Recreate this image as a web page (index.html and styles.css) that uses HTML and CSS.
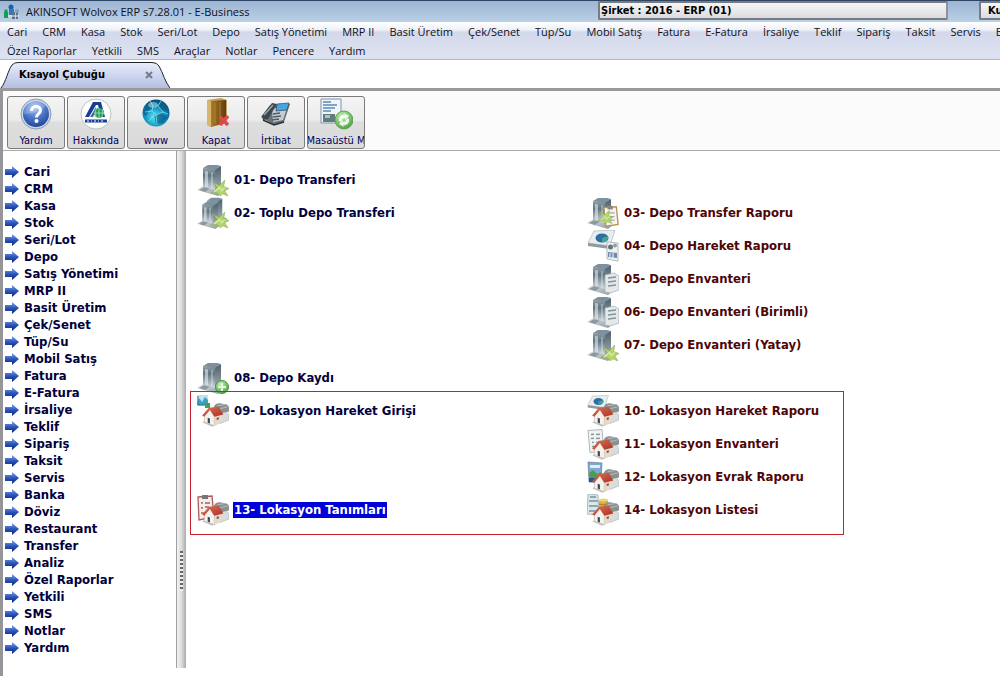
FILE: index.html
```html
<!DOCTYPE html>
<html lang="tr">
<head>
<meta charset="utf-8">
<title>AKINSOFT Wolvox ERP</title>
<link rel="stylesheet" href="styles.css">
</head>
<body>
<svg class="defs" aria-hidden="true">
  <defs>
    <linearGradient id="gMetal" x1="0" y1="0" x2="0" y2="1"><stop offset="0" stop-color="#8fa0a9"/><stop offset=".35" stop-color="#5f7480"/><stop offset="1" stop-color="#d3dbe0"/></linearGradient>
    <linearGradient id="gSide" x1="0" y1="0" x2="0" y2="1"><stop offset="0" stop-color="#4c5f6b"/><stop offset="1" stop-color="#a3b0b7"/></linearGradient>
    <linearGradient id="gBase" x1="0" y1="0" x2="1" y2="1"><stop offset="0" stop-color="#dfe5e8"/><stop offset="1" stop-color="#87949b"/></linearGradient>
    <linearGradient id="gArrow" x1="0" y1="0" x2="0" y2="1"><stop offset="0" stop-color="#7fa6ea"/><stop offset=".5" stop-color="#2b55bd"/><stop offset="1" stop-color="#0d2470"/></linearGradient>
    <linearGradient id="gRoof" x1="0" y1="0" x2="1" y2="1"><stop offset="0" stop-color="#e2735b"/><stop offset="1" stop-color="#a93222"/></linearGradient>
    <linearGradient id="gDoor" x1="0" x2="1"><stop offset="0" stop-color="#a97c2b"/><stop offset=".5" stop-color="#86591a"/><stop offset="1" stop-color="#5f3d10"/></linearGradient>
    <radialGradient id="gHelp" cx=".45" cy=".25" r=".8"><stop offset="0" stop-color="#a9c6f3"/><stop offset=".5" stop-color="#4c78c9"/><stop offset="1" stop-color="#1c3f92"/></radialGradient>
    <radialGradient id="gGlobe" cx=".45" cy=".65" r=".7"><stop offset="0" stop-color="#5fe4f4"/><stop offset=".5" stop-color="#1398c6"/><stop offset="1" stop-color="#053d6d"/></radialGradient>
    <radialGradient id="gGreen" cx=".4" cy=".3" r=".8"><stop offset="0" stop-color="#c6f0b4"/><stop offset="1" stop-color="#3f9c38"/></radialGradient>
    <symbol id="arrow" viewBox="0 0 14 12"><path d="M0 3h7V0l7 6-7 6V9H0z" fill="url(#gArrow)"/></symbol>
    <symbol id="towerShape" viewBox="0 0 32 32">
      <path d="M0 26l8-5 22 4-9 7z" fill="url(#gBase)"/>
      <path d="M2 26l7-4 6 1-7 5z" fill="#8d999f"/>
      <path d="M6 4l12 1v21L6 23z" fill="url(#gMetal)"/>
      <path d="M18 5l6-3v21l-6 4z" fill="url(#gSide)"/>
      <path d="M6 4l5-3h9l4 1-6 4z" fill="#7c919d"/>
      <path d="M8 7l3 .4V23l-3-.6z" fill="#eef2f4" opacity=".55"/>
      <path d="M14 8l2 .2v16l-2-.5z" fill="#eef2f4" opacity=".35"/>
    </symbol>
    <symbol id="leafArrow" viewBox="0 0 17 16"><path d="M0 13l6-5-4-5 6 3 5-5-1 6 5 2-4 2 3 5-5-2-2 2-3-3z" fill="#b4d56c" stroke="#7fa348" stroke-width=".5"/><path d="M3 12l5-4 2 3 3-3" stroke="#e0f0b4" fill="none"/></symbol>
    <symbol id="homes" viewBox="0 0 26 22">
      <path d="M1 18l9 4 15-7-8-4z" fill="#bfc5c4"/>
      <path d="M14 8l7-1 4 4v5l-8 3-3-3z" fill="#d9dcdc" stroke="#9a9f9f" stroke-width=".4"/>
      <path d="M11 6c1-4 3-5 6-5l6 1c2 1 3 4 3 6l-9 2c-1-2-3-4-6-4z" fill="#89908f"/>
      <path d="M15 3l7-1M16 6l8-2" stroke="#b3b9b8" fill="none"/>
      <path d="M3 12l5-6 4 7v8l-9-3z" fill="#f5f2eb" stroke="#b8aa9d" stroke-width=".5"/>
      <path d="M12 12l6-1v7l-6 3z" fill="#ead9cb"/>
      <path d="M1 12l6-7 9-1 4 7-8 2-4-6-5 6z" fill="url(#gRoof)"/>
      <path d="M6 14l2 .5V19l-2-.6z" fill="#3d4960"/><path d="M14 14l2-.5v2l-2 .5z" fill="#775e55"/>
    </symbol>
    <symbol id="sheet" viewBox="0 0 18 24"><path d="M1 1l14-1 2 21-14 2z" fill="#f1f4f5" stroke="#9ba5a9" stroke-width=".8"/><path d="M4 5l3-.2M9 5l4-.3M4 9l3-.2M9 9l4-.3M5 13l2-.2M9 13l5-.4M5 17l2-.2M9 17l5-.4" stroke="#8a969e" stroke-width="1.500"/></symbol>
    <symbol id="disc" viewBox="0 0 30 20"><path d="M7 1l21-1-5 16-22-3z" fill="#e8edef" stroke="#aeb6ba" stroke-width=".7"/><path d="M1 13l22 3v3L1 16z" fill="#8f999e"/><ellipse cx="15" cy="8" rx="6.500" ry="4.500" fill="#2d6da2"/><path d="M15 8l6-2c1 3-2 6-6 6.500z" fill="#43a394"/></symbol>
    <symbol id="clip" viewBox="0 0 18 26"><path d="M1 3l14-1 2 20-14 2z" fill="#f6f4ee" stroke="#b9934f" stroke-width="1.500"/><path d="M5 1h6v4H5z" fill="#8a8680"/><path d="M5 9h8M5 13h8M6 17h7" stroke="#a3a8a8" stroke-width="1.300"/></symbol>

    <symbol id="depo" viewBox="0 0 32 32"><use href="#towerShape" width="32" height="32"/><use href="#leafArrow" x="14" y="15" width="18" height="17"/></symbol>
    <symbol id="depo2" viewBox="0 0 32 32"><use href="#towerShape" x="5" width="27" height="27"/><use href="#towerShape" y="4" width="28" height="28"/><use href="#leafArrow" x="14" y="14" width="18" height="17"/></symbol>
    <symbol id="depoClip" viewBox="0 0 32 32"><use href="#towerShape" width="32" height="32"/><use href="#clip" x="16" y="7" width="16" height="25"/><use href="#leafArrow" x="11" y="12" width="15" height="15"/></symbol>
    <symbol id="depoDisc" viewBox="0 0 32 32"><use href="#disc" width="30" height="20"/><path d="M20 12l11 1v18l-11-2z" fill="#eef2f4" stroke="#9aa5ab" stroke-width=".7"/><circle cx="23.500" cy="17" r="2.500" fill="#68747b"/><circle cx="28" cy="15.500" r="2" fill="#8ea0aa"/><path d="M21 22l9 1v5l-9-1z" fill="#6d88b1"/><path d="M23 23v4M26 23v5" stroke="#fff"/></symbol>
    <symbol id="depoSheet" viewBox="0 0 32 32"><use href="#towerShape" width="32" height="32"/><path d="M18 12l9-2 5 3v14l-9 3-5-1z" fill="#e3e8eb" stroke="#a2adb3" stroke-width=".7"/><path d="M21 15l8-1M21 19l8-1M21 23l8-1" stroke="#87939a" stroke-width="1.500"/></symbol>
    <symbol id="depoAdd" viewBox="0 0 32 32"><use href="#towerShape" width="32" height="32"/><circle cx="25" cy="25" r="6.500" fill="url(#gGreen)" stroke="#568a42"/><path d="M25 21v8M21 25h8" stroke="#e7f7dd" stroke-width="2"/></symbol>
    <symbol id="homeChart" viewBox="0 0 32 32"><path d="M0 0h11v11H0z" fill="#bfe3ef"/><path d="M0 9l2-6 3 4 3-5 3 3v5H0z" fill="#3f9fc3"/><path d="M1 1v9h10" stroke="#287b9b" fill="none"/><path d="M8 8l4 4M8 12h4V8" stroke="#3ba453" stroke-width="2"/><use href="#homes" x="4" y="7" width="29" height="25"/></symbol>
    <symbol id="homeClip" viewBox="0 0 32 32"><path d="M1 3l14-1 2 21-15 3z" fill="#f6ecec" stroke="#a95e5e" stroke-width="1.300"/><path d="M5 1h6v4H5z" fill="#777"/><path d="M4 9l2-.2M8 9h5M4 14l2-.2M8 13h4M4 19h4" stroke="#966" stroke-width="1.500"/><use href="#homes" x="4" y="7" width="29" height="25"/></symbol>
    <symbol id="homeDisc" viewBox="0 0 32 32"><use href="#disc" width="23" height="16"/><use href="#homes" x="4" y="7" width="29" height="25"/></symbol>
    <symbol id="homeSheet" viewBox="0 0 32 32"><use href="#sheet" width="18" height="27"/><use href="#homes" x="4" y="7" width="29" height="25"/></symbol>
    <symbol id="homeDoc" viewBox="0 0 32 32"><path d="M1 1l14 1-1 20-12-1z" fill="#7da8cf" stroke="#6a7d92" stroke-width=".7"/><path d="M3 4h10v3H3z" fill="#e2eef5"/><path d="M2 12l4-3 4 4 4-2v9H3z" fill="#4b9c52"/><path d="M2 17h11v4H2z" fill="#2c5688"/><use href="#homes" x="4" y="7" width="29" height="25"/></symbol>
    <symbol id="homeList" viewBox="0 0 32 32"><path d="M1 0l10 1 1 20-12-1z" fill="#dbe6e7" stroke="#93a3a7" stroke-width=".7"/><path d="M3 3h6M2 7h9M2 12h9M2 17h8" stroke="#7593a5" stroke-width="1.500"/><path d="M12 6c2-1 7-1 9 0v10h-9z" fill="#d9b13b"/><ellipse cx="16.500" cy="6" rx="4.500" ry="1.600" fill="#f0d474"/><path d="M12 10c3 1 6 1 9 0" stroke="#a27d1b" fill="none"/><use href="#homes" x="4" y="7" width="29" height="25"/></symbol>
  </defs>
</svg>

<header class="titlebar">
  <svg class="app-icon" viewBox="0 0 16 16"><circle cx="7" cy="3" r="2.500" fill="#1e5fae"/><path d="M5 5h5v6H5z" fill="#2e7cc0"/><path d="M0 8h4v6H0z" fill="#12a048"/><circle cx="2" cy="7" r="1.700" fill="#12a048"/><path d="M8 8h3v7H8zM12 8h2v7h-2z" fill="#5d7187"/><circle cx="13" cy="7" r="2" fill="#8aa0b5"/><path d="M4 12h11" stroke="#eef"/></svg>
  <h1 class="title">AKINSOFT Wolvox ERP s7.28.01 - E-Business</h1>
  <div class="status company">Şirket : 2016 - ERP (01)</div>
  <div class="status user">Ku</div>
</header>

<nav class="menubar" aria-label="Ana menü">
  <div class="menu-row">
    <button>Cari</button><button>CRM</button><button>Kasa</button><button>Stok</button><button>Seri/Lot</button><button>Depo</button><button>Satış Yönetimi</button><button>MRP II</button><button>Basit Üretim</button><button>Çek/Senet</button><button>Tüp/Su</button><button>Mobil Satış</button><button>Fatura</button><button>E-Fatura</button><button>İrsaliye</button><button>Teklif</button><button>Sipariş</button><button>Taksit</button><button>Servis</button><button>Banka</button>
  </div>
  <div class="menu-row">
    <button>Özel Raporlar</button><button>Yetkili</button><button>SMS</button><button>Araçlar</button><button>Notlar</button><button>Pencere</button><button>Yardım</button>
  </div>
</nav>

<div class="tabs">
  <div class="tab">
    <svg class="tab-shape" viewBox="0 0 170 26" aria-hidden="true"><defs><linearGradient id="gTab" x1="0" y1="0" x2="0" y2="1"><stop offset="0" stop-color="#e9edfa"/><stop offset="1" stop-color="#b4bfe4"/></linearGradient></defs><path d="M1 26C6 20 8 8 12 3Q14 .5 18 .5H152Q157 .5 159 4C163 11 165 20 170 26" fill="url(#gTab)" stroke="#20242e"/></svg>
    <span class="tab-label">Kısayol Çubuğu</span>
    <button class="tab-close" aria-label="Kapat"><svg viewBox="0 0 8 8"><path d="M1 1l6 6M7 1L1 7" stroke="#777b88" stroke-width="2"/></svg></button>
  </div>
</div>

<div class="workspace">
  <div class="toolbar">
    <button class="tool"><svg viewBox="0 0 34 34"><circle cx="17" cy="17" r="15" fill="#ccd6e6" stroke="#8b9bb8"/><circle cx="17" cy="17" r="13" fill="url(#gHelp)"/><path d="M5 17a12 12 0 0 1 22-8Q20 17 5 17z" fill="#fff" opacity=".2"/><path d="M12.500 14c0-6 9-6 9-.5 0 3-4 3.500-4 7" fill="none" stroke="#fff" stroke-width="3"/><circle cx="17.500" cy="24" r="2" fill="#fff"/></svg><span>Yardım</span></button>
    <button class="tool"><svg viewBox="0 0 34 34"><circle cx="17" cy="17" r="15" fill="#fff" stroke="#aaa" stroke-width=".7"/><path d="M6 20L14 5h8l4 15h-4L19 8h-2l-7 12z" fill="#173e95"/><path d="M11 20l6-10v4l-3 6z" fill="#3e67b5"/><circle cx="20" cy="16" r="5" fill="#23a05c"/><path d="M15 16h10M20 11v10M17 12q-2 4 0 8M23 12q2 4 0 8" stroke="#d6f0df" stroke-width=".6" fill="none"/><path d="M6 22.500h22v3H6z" fill="#173e95"/><path d="M8 24h2M12 24h1M15 24h2M19 24h1M22 24h2" stroke="#fff"/></svg><span>Hakkında</span></button>
    <button class="tool"><svg viewBox="0 0 34 34"><circle cx="17" cy="16" r="13.500" fill="url(#gGlobe)"/><path d="M7 9q5-7 10-4l-1 5-6 3-3 6-3-3zM21 6q6 3 7 8l-6-1-3-4zM15 18l7-2 6 4-4 6-7 1z" fill="#06597f" opacity=".65"/><path d="M6 15l7-1 4 4 7-3 5 2M11 4l3 5-1 5M22 4l-3 5 5 6M10 24l3-4 4-2 1 9" stroke="#8eeef6" stroke-width=".7" fill="none"/><ellipse cx="14" cy="8" rx="5" ry="3" fill="#d6fbff" opacity=".45"/></svg><span>www</span></button>
    <button class="tool"><svg viewBox="0 0 34 34"><path d="M8 3l14-2 6 2v24l-6-1-10 4-4-2z" fill="#c6a15b"/><path d="M8 3l4 1v26l-4-2z" fill="#d8b56d"/><path d="M12 4l15-1v23l-15 4z" fill="url(#gDoor)"/><path d="M16 6v20M21 5v20" stroke="#b68b3e" stroke-width=".8"/><path d="M21 20l8 8M29 19l-8 9" stroke="#e5454b" stroke-width="3.500"/></svg><span>Kapat</span></button>
    <button class="tool"><svg viewBox="0 0 34 34"><path d="M2 20l9-12 20-1-6 18-10 3z" fill="#68727a"/><path d="M13 12l16-4-5 15-10 2z" fill="#c5cdd1"/><path d="M18 7l12-1-2 7-11 1z" fill="#45a5e2" stroke="#33444f" stroke-width=".7"/><path d="M3 19L13 6l5 1-9 15-5 1z" fill="#3d464d"/><path d="M5 18L14 8" stroke="#9ca8ae" stroke-width="1.500"/><path d="M14 17l7-1M14 20l8-1M13 23l7-1" stroke="#505b63" stroke-width="1.500"/><path d="M4 23l11 5 10-3" stroke="#2c3338" stroke-width="1.500" fill="none"/></svg><span>İrtibat</span></button>
    <button class="tool"><svg viewBox="0 0 34 34"><path d="M2 2h20v24H2z" fill="#eef5fb" stroke="#7b94ad"/><path d="M4 5h8M4 8h14M4 11h12M4 14h8" stroke="#5e8ab5" stroke-width="1.300"/><path d="M4 17h12v8H4z" fill="#607d79"/><path d="M6 18h5v3H6z" fill="#a4c6dd"/><circle cx="25" cy="23" r="9" fill="url(#gGreen)" stroke="#609f4e"/><path d="M20 24a5 5 0 0 1 6-6l-1-2 5 3-4 4v-2q-3 0-4 4zM30 22a5 5 0 0 1-6 6l1 2-5-3 4-4v2q3 0 4-4z" fill="#fff" opacity=".85"/></svg><span>Masaüstü M</span></button>
  </div>

  <div class="panes">
    <nav class="sidebar" aria-label="Modüller">
      <ul class="modules">
        <li><a href="#"><svg><use href="#arrow"/></svg>Cari</a></li>
        <li><a href="#"><svg><use href="#arrow"/></svg>CRM</a></li>
        <li><a href="#"><svg><use href="#arrow"/></svg>Kasa</a></li>
        <li><a href="#"><svg><use href="#arrow"/></svg>Stok</a></li>
        <li><a href="#"><svg><use href="#arrow"/></svg>Seri/Lot</a></li>
        <li><a href="#"><svg><use href="#arrow"/></svg>Depo</a></li>
        <li><a href="#"><svg><use href="#arrow"/></svg>Satış Yönetimi</a></li>
        <li><a href="#"><svg><use href="#arrow"/></svg>MRP II</a></li>
        <li><a href="#"><svg><use href="#arrow"/></svg>Basit Üretim</a></li>
        <li><a href="#"><svg><use href="#arrow"/></svg>Çek/Senet</a></li>
        <li><a href="#"><svg><use href="#arrow"/></svg>Tüp/Su</a></li>
        <li><a href="#"><svg><use href="#arrow"/></svg>Mobil Satış</a></li>
        <li><a href="#"><svg><use href="#arrow"/></svg>Fatura</a></li>
        <li><a href="#"><svg><use href="#arrow"/></svg>E-Fatura</a></li>
        <li><a href="#"><svg><use href="#arrow"/></svg>İrsaliye</a></li>
        <li><a href="#"><svg><use href="#arrow"/></svg>Teklif</a></li>
        <li><a href="#"><svg><use href="#arrow"/></svg>Sipariş</a></li>
        <li><a href="#"><svg><use href="#arrow"/></svg>Taksit</a></li>
        <li><a href="#"><svg><use href="#arrow"/></svg>Servis</a></li>
        <li><a href="#"><svg><use href="#arrow"/></svg>Banka</a></li>
        <li><a href="#"><svg><use href="#arrow"/></svg>Döviz</a></li>
        <li><a href="#"><svg><use href="#arrow"/></svg>Restaurant</a></li>
        <li><a href="#"><svg><use href="#arrow"/></svg>Transfer</a></li>
        <li><a href="#"><svg><use href="#arrow"/></svg>Analiz</a></li>
        <li><a href="#"><svg><use href="#arrow"/></svg>Özel Raporlar</a></li>
        <li><a href="#"><svg><use href="#arrow"/></svg>Yetkili</a></li>
        <li><a href="#"><svg><use href="#arrow"/></svg>SMS</a></li>
        <li><a href="#"><svg><use href="#arrow"/></svg>Notlar</a></li>
        <li><a href="#"><svg><use href="#arrow"/></svg>Yardım</a></li>
      </ul>
    </nav>
    <div class="splitter"><div class="grip"></div></div>
    <main class="content">
      <div class="shortcuts">
        <a class="item" href="#"><svg><use href="#depo"/></svg><span>01- Depo Transferi</span></a>
        <a class="item" href="#"><svg><use href="#depo2"/></svg><span>02- Toplu Depo Transferi</span></a>
        <a class="item report" href="#"><svg><use href="#depoClip"/></svg><span>03- Depo Transfer Raporu</span></a>
        <a class="item report" href="#"><svg><use href="#depoDisc"/></svg><span>04- Depo Hareket Raporu</span></a>
        <a class="item report" href="#"><svg><use href="#depoSheet"/></svg><span>05- Depo Envanteri</span></a>
        <a class="item report" href="#"><svg><use href="#depoSheet"/></svg><span>06- Depo Envanteri (Birimli)</span></a>
        <a class="item report" href="#"><svg><use href="#depo"/></svg><span>07- Depo Envanteri (Yatay)</span></a>
        <a class="item" href="#"><svg><use href="#depoAdd"/></svg><span>08- Depo Kaydı</span></a>
      </div>
      <div class="shortcuts marked">
        <a class="item" href="#"><svg><use href="#homeChart"/></svg><span>09- Lokasyon Hareket Girişi</span></a>
        <a class="item report" href="#"><svg><use href="#homeDisc"/></svg><span>10- Lokasyon Hareket Raporu</span></a>
        <a class="item report" href="#"><svg><use href="#homeSheet"/></svg><span>11- Lokasyon Envanteri</span></a>
        <a class="item report" href="#"><svg><use href="#homeDoc"/></svg><span>12- Lokasyon Evrak Raporu</span></a>
        <a class="item selected" href="#"><svg><use href="#homeClip"/></svg><span>13- Lokasyon Tanımları</span></a>
        <a class="item report" href="#"><svg><use href="#homeList"/></svg><span>14- Lokasyon Listesi</span></a>
      </div>
    </main>
  </div>
</div>
</body>
</html>
```

FILE: styles.css
```css
* { box-sizing: border-box; }

body {
  margin: 0;
  min-height: 100vh;
  display: flex;
  flex-direction: column;
  overflow: hidden;
  background: #fff;
  color: #101018;
  font: 11px/16px "DejaVu Sans Condensed", "Noto Sans", sans-serif;
}

button {
  margin: 0;
  padding: 0;
  border: 0;
  background: none;
  color: inherit;
  font: inherit;
  white-space: nowrap;
}

a { color: inherit; text-decoration: none; }

.defs { position: absolute; width: 0; height: 0; }

/* Title bar */
.titlebar {
  display: flex;
  align-items: center;
  height: 22px;
  padding-left: 4px;
  border-top: 1px solid #2d4463;
  background: linear-gradient(#9cb5d3, #bad0e7);
  overflow: hidden;
}
.app-icon { width: 16px; height: 16px; margin-right: 6px; flex: none; }
.title {
  flex: 1;
  margin: 0;
  font: 11px/16px "Open Sans", "Noto Sans", sans-serif;
  white-space: nowrap;
}
.status {
  flex: none;
  height: 19px;
  margin-bottom: 2px;
  padding: 0 1px;
  border: 2px solid #777c84;
  border-right-color: #8e9298;
  border-radius: 2px;
  background: linear-gradient(#f6f6f6, #dcdce0);
  color: #000;
  font-weight: bold;
  white-space: nowrap;
}
.company { width: 350px; margin-right: 31px; }
.user { width: 21px; padding: 0 0 0 7px; border-right: 0; border-radius: 2px 0 0 2px; overflow: hidden; }

/* Menu bar */
.menubar {
  display: flex;
  flex-direction: column;
  gap: 3px;
  height: 38px;
  padding: 2px 0 0 7px;
  border-bottom: 1px solid #b4b8c2;
  background: linear-gradient(#fff, #edf0f8 8px, #d3d9ea 10px, #dde3f2);
  font: 11px/16px "Open Sans", "Noto Sans", sans-serif;
}
.menu-row { display: flex; gap: 15px; height: 16px; overflow: hidden; }

/* Tabs */
.tabs { display: flex; align-items: flex-end; height: 31px; border-bottom: 3px solid #999; }
.tab {
  position: relative;
  display: flex;
  align-items: center;
  justify-content: space-between;
  width: 170px;
  height: 26px;
  padding: 0 17px 0 19px;
}
.tab-shape { position: absolute; inset: 0; width: 100%; height: 100%; }
.tab-label { position: relative; color: #000; font-weight: bold; }
.tab-close { position: relative; width: 8px; height: 8px; }
.tab-close svg { display: block; width: 8px; height: 8px; }

/* Workspace */
.workspace {
  flex: 1;
  display: flex;
  flex-direction: column;
  border-left: 3px solid #96969a;
}
.toolbar {
  display: flex;
  gap: 2px;
  height: 60px;
  padding: 5px 4px 0;
  border-bottom: 1px solid #aaa;
  background: #fbfbfb;
}
.tool {
  display: flex;
  flex-direction: column;
  align-items: center;
  justify-content: space-between;
  width: 58px;
  height: 53px;
  border: 1px solid #7b7b7b;
  border-radius: 3px;
  background: linear-gradient(#f4f4f4, #ebebeb 45%, #dedede 50%, #dadada);
  color: #00005c;
  line-height: 14px;
  overflow: hidden;
}
.tool svg { width: 34px; height: 34px; flex: none; }

.panes { flex: 1; display: flex; }
.sidebar { width: 173px; padding: 12px 0 0 2px; }
.modules {
  margin: 0;
  padding: 0;
  list-style: none;
  color: #00003c;
  font-size: 13px;
  font-weight: bold;
}
.modules a { display: flex; align-items: center; gap: 5px; height: 17px; }
.modules svg { width: 14px; height: 12px; }

.splitter {
  display: flex;
  align-items: center;
  justify-content: center;
  width: 10px;
  margin-bottom: 8px;
  padding-top: 322px;
  border-left: 1px solid #a0a0a4;
  background: linear-gradient(90deg, #f2f2f2, #dcdcdc 50%, #aaa);
}
.grip {
  width: 3px;
  height: 40px;
  background: repeating-linear-gradient(#666 0 2px, #eee 2px 4px);
}

.content { flex: 1; padding: 12px 0 0 11px; }
.shortcuts {
  display: grid;
  grid-template-columns: 390px 1fr;
  grid-auto-rows: 33px;
  color: #00003c;
  font-size: 13px;
  font-weight: bold;
}
.item { grid-column: 1; display: flex; align-items: center; gap: 4px; }
.item svg { width: 32px; height: 32px; }
.item span { padding: 0 1px; }
.report { grid-column: 2; color: #4e0505; }
.selected span { background: #0000d8; color: #fff; }

/* Red frame drawn over the location shortcuts */
.marked { position: relative; }
.marked::after {
  content: "";
  position: absolute;
  inset: -3px 156px -9px -7px;
  border: 1px solid #c8232c;
  pointer-events: none;
}
```
